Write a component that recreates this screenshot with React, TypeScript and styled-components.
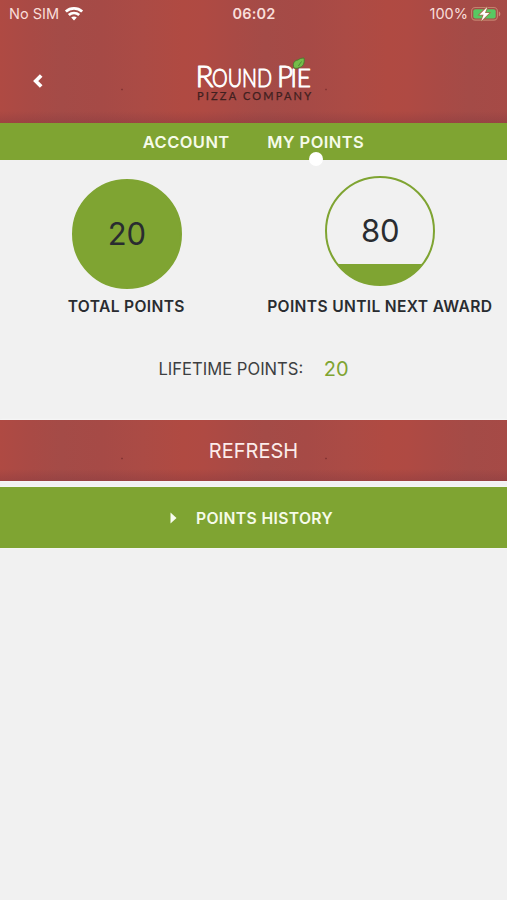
import React from "react";
import styled, { createGlobalStyle, css } from "styled-components";

const GREEN = "#7fa432";
const INK = "#292c30";

const GlobalStyle = createGlobalStyle`
  * { box-sizing: border-box; }
  body {
    margin: 0;
    background: #f1f1f1;
    font-family: Inter, "Liberation Sans", sans-serif;
    color: ${INK};
  }
`;

const brick = css`
  background-color: #aa4a45;
  background-image:
    linear-gradient(to bottom, transparent calc(100% - 12px), rgba(115, 50, 60, 0.28)),
    radial-gradient(circle 1.3px at 122px 50%, rgba(90, 25, 30, 0.7), transparent),
    linear-gradient(90deg, #af4a43 0%, #a94a45 15%, #a44b47 30%, #a64a46 50%, #ab4b45 70%, #b04a42 90%, #af4a43 100%);
  background-size: 100% 100%, 204px 100%, 204px 100%;
`;

const Screen = styled.main`
  width: 100%;
  height: 900px;
  overflow: hidden;
  background: #f1f1f1;
`;

const Header = styled.header`
  height: 123px;
  display: flex;
  flex-direction: column;
  ${brick}
  background-position: 0 0, 0 28px, 0 0;
`;

const StatusBar = styled.div`
  height: 28px;
  padding: 0 6px 0 9px;
  display: grid;
  grid-template-columns: 1fr auto 1fr;
  align-items: center;
  font-size: 14.5px;
  line-height: 28px;
  color: #f9deda;
`;

const StatusGroup = styled.div<{ $end?: boolean }>`
  display: flex;
  align-items: center;
  gap: ${(p) => (p.$end ? 3 : 6)}px;
  justify-content: ${(p) => (p.$end ? "flex-end" : "flex-start")};
`;

const Clock = styled.div`
  margin-right: 2px;
  font-weight: 600;
  letter-spacing: 0.2px;
`;

const TitleBar = styled.div`
  flex: 1;
  display: grid;
  grid-template-columns: 76px 1fr 76px;
  align-items: center;
`;

const BackButton = styled.button`
  display: grid;
  place-items: center;
  height: 44px;
  margin-top: 10px;
  padding: 0;
  border: 0;
  background: none;
`;

const Logo = styled.svg`
  justify-self: center;
  display: block;
  margin-top: 9px;
`;

const Tabs = styled.nav`
  height: 36.7px;
  display: flex;
  justify-content: center;
  gap: 37.5px;
  background: ${GREEN};
`;

const Tab = styled.a<{ $active?: boolean }>`
  position: relative;
  font-size: 16.5px;
  line-height: 38px;
  font-weight: 600;
  letter-spacing: 0.42px;
  color: #f6fbe9;
  ${(p) =>
    p.$active &&
    css`
      &::after {
        content: "";
        position: absolute;
        left: 50%;
        bottom: -6px;
        width: 14px;
        height: 14px;
        margin-left: -7px;
        border-radius: 50%;
        background: #fff;
      }
    `}
`;

const Totals = styled.section`
  height: 165px;
  display: grid;
  grid-template-columns: 1fr 1fr;
`;

const Total = styled.div<{ $top: number }>`
  display: flex;
  flex-direction: column;
  align-items: center;
  justify-content: space-between;
  padding: ${(p) => p.$top}px 0 6.5px;
`;

const Dial = styled.div<{ $filled: number }>`
  width: 110px;
  height: 110px;
  display: grid;
  place-items: center;
  border: 2.5px solid ${GREEN};
  border-radius: 50%;
  background: linear-gradient(to top, ${GREEN} ${(p) => p.$filled}%, transparent ${(p) => p.$filled}%) border-box;
  font-size: 31px;
  font-weight: 400;
  letter-spacing: -0.2px;
`;

const TotalLabel = styled.div`
  margin-right: 1px;
  font-size: 15.6px;
  line-height: 22px;
  font-weight: 600;
  letter-spacing: 0.34px;
  white-space: nowrap;
`;

const Lifetime = styled.section`
  height: 95px;
  padding-top: 32px;
  display: flex;
  justify-content: center;
  gap: 20.5px;
  font-size: 16.6px;
  line-height: 24px;
  color: #3d3f41;
`;

const LifetimeValue = styled.span`
  font-size: 20px;
  color: ${GREEN};
`;

const RefreshButton = styled.button`
  display: block;
  width: 100%;
  height: 61px;
  padding: 1px 0 0;
  border: 0;
  ${brick}
  background-position: 0 0, 0 8px, 0 0;
  box-shadow: 0 0 2px #fff;
  font: 400 20px/61px Inter, sans-serif;
  color: #fcecea;
`;

const HistoryButton = styled.button`
  width: 100%;
  height: 61px;
  margin-top: 6.5px;
  padding: 1px 4px 0 0;
  display: flex;
  align-items: center;
  justify-content: center;
  gap: 19px;
  border: 0;
  background: ${GREEN};
  box-shadow: 0 0 2px #fff;
  font: 600 15.7px/61px Inter, sans-serif;
  letter-spacing: 0.36px;
  color: #f6fbe9;
`;

function WifiIcon() {
  return (
    <svg width="18" height="14" viewBox="0 0 18 14" fill="none" stroke="#fff" strokeWidth="2.7">
      <path d="M.9 4.600C5.400.4 12.600.4 17.100 4.600" />
      <path d="M3.800 8c2.900-2.700 7.500-2.700 10.400 0" />
      <path d="M6.200 10.500 9 13.400l2.800-2.900c-1.500-1.400-4.100-1.400-5.600 0Z" fill="#fff" stroke="none" />
    </svg>
  );
}

function BatteryIcon() {
  return (
    <svg width="30" height="16" viewBox="0 0 30 16">
      <rect x=".6" y="1.500" width="25.800" height="12.600" rx="3.600" fill="none" stroke="#c4816f" strokeWidth="1.1" />
      <path d="M27.800 5.400c2 .5 2 4.300 0 4.800Z" fill="#cf8a7b" />
      <rect x="2.300" y="3.200" width="22.400" height="9.200" rx="2" fill="#58c862" />
      <path d="M16.300.9 8.400 8.800h4.200L10.300 15l8-8h-4.300Z" fill="#fff" stroke="#a96a4a" strokeWidth="1.6" paintOrder="stroke" />
    </svg>
  );
}

function BrandLogo() {
  return (
    <Logo width="118" height="46" viewBox="0 0 118 46" fontFamily="Lato, Inter, sans-serif">
      <g fill="#fff" stroke="#fff" strokeWidth="1" strokeLinejoin="round" fontWeight="300">
        <text x=".5" y="29.500" fontSize="29" textLength="18" lengthAdjust="spacingAndGlyphs">R</text>
        <text x="17" y="29.500" fontSize="24.500" textLength="60" lengthAdjust="spacingAndGlyphs">OUND</text>
        <text x="82" y="29.500" fontSize="29" textLength="16" lengthAdjust="spacingAndGlyphs">P</text>
        <text x="95.500" y="29.500" fontSize="24.500" textLength="20.500" lengthAdjust="spacingAndGlyphs">IE</text>
      </g>
      <text x="2" y="42.500" fontSize="11" fill="#40201f" stroke="#40201f" strokeWidth=".25" textLength="114" lengthAdjust="spacing">
        PIZZA COMPANY
      </text>
      <path d="M99 11c-2-5 1-8 4-8 1-1 3-2 6-2 1 5-1 9-5 9.500-1 1-3 1-5 .5Z" fill="#75bd4a" stroke="#48792f" strokeWidth=".9" />
      <path d="M103.500 9c1-2 2-3 3-4.500" fill="none" stroke="#3f762e" strokeWidth=".8" />
    </Logo>
  );
}

export default function App() {
  return (
    <>
      <GlobalStyle />
      <Screen>
        <Header>
          <StatusBar>
            <StatusGroup>
              No SIM
              <WifiIcon />
            </StatusGroup>
            <Clock>06:02</Clock>
            <StatusGroup $end>
              100%
              <BatteryIcon />
            </StatusGroup>
          </StatusBar>
          <TitleBar>
            <BackButton aria-label="Back">
              <svg width="10" height="14" viewBox="0 0 10 14" fill="none" stroke="#fff" strokeWidth="3.700">
                <path d="M8.200 1.500 2.700 7l5.500 5.500" />
              </svg>
            </BackButton>
            <BrandLogo />
          </TitleBar>
        </Header>
        <Tabs>
          <Tab>ACCOUNT</Tab>
          <Tab $active>MY POINTS</Tab>
        </Tabs>
        <Totals>
          <Total $top={19.3}>
            <Dial $filled={100}>20</Dial>
            <TotalLabel>TOTAL POINTS</TotalLabel>
          </Total>
          <Total $top={16}>
            <Dial $filled={20}>80</Dial>
            <TotalLabel>POINTS UNTIL NEXT AWARD</TotalLabel>
          </Total>
        </Totals>
        <Lifetime>
          <span>LIFETIME POINTS:</span>
          <LifetimeValue>20</LifetimeValue>
        </Lifetime>
        <RefreshButton>REFRESH</RefreshButton>
        <HistoryButton>
          <svg width="7" height="12" viewBox="0 0 7 12">
            <path d="M.5.500 6.500 6l-6 5.500Z" fill="#f8fcef" />
          </svg>
          POINTS HISTORY
        </HistoryButton>
      </Screen>
    </>
  );
}
